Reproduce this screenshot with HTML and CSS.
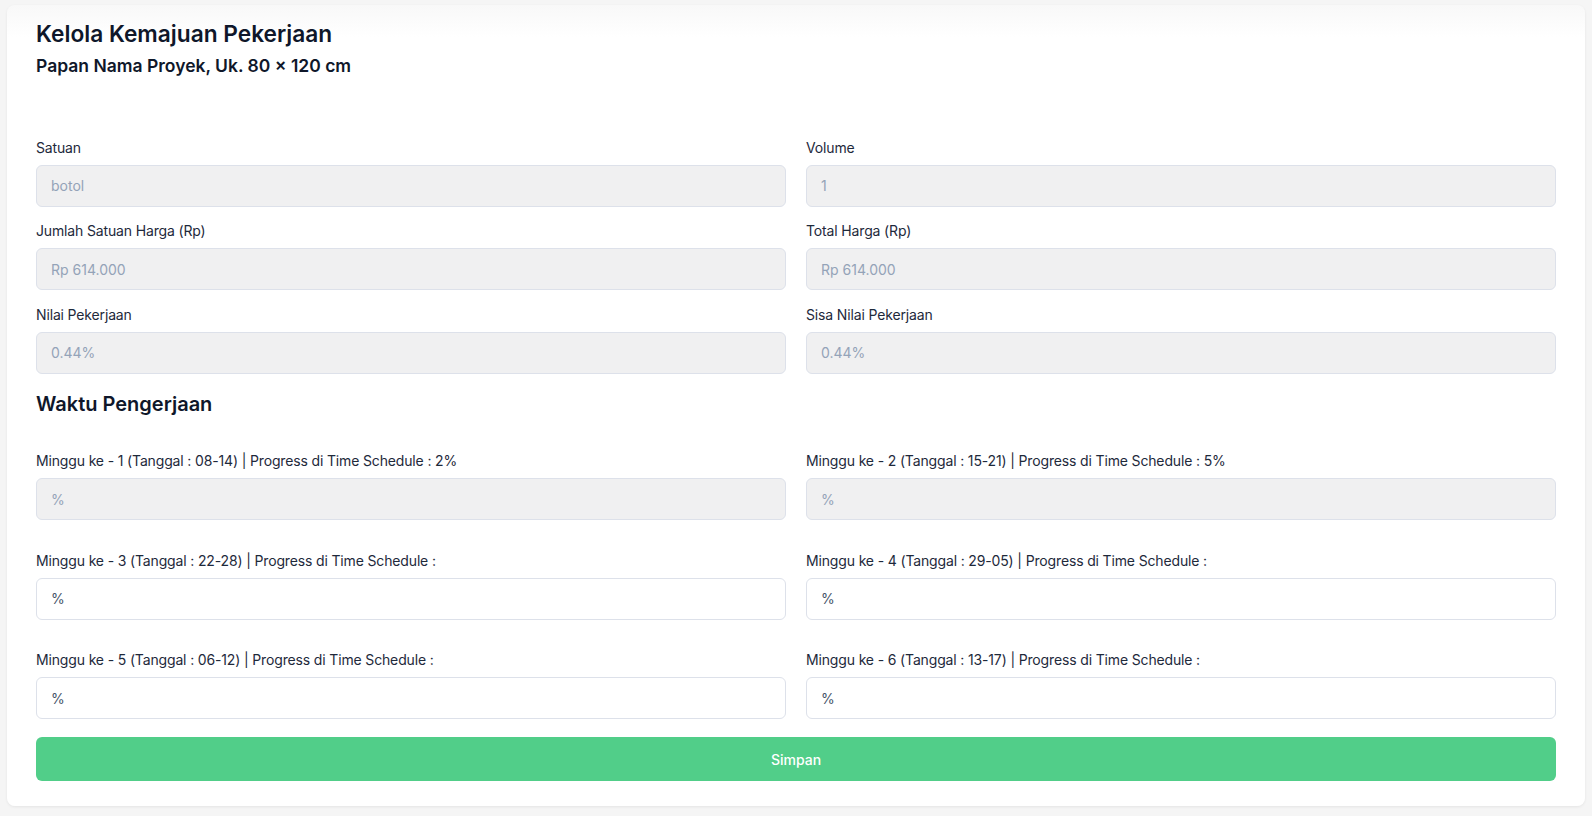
FILE: index.html
```html
<!DOCTYPE html>
<html lang="id">
<head>
<meta charset="utf-8">
<title>Kelola Kemajuan Pekerjaan</title>
<link rel="stylesheet" href="styles.css">
</head>
<body>
<main class="card">
  <header class="card-header">
    <h1 class="title">Kelola Kemajuan Pekerjaan</h1>
    <h2 class="subtitle">Papan Nama Proyek, Uk. 80 × 120 cm</h2>
  </header>

  <form class="form">
    <div class="grid info-grid">
      <div class="field">
        <label class="label">Satuan</label>
        <input class="input" type="text" placeholder="botol" disabled>
      </div>
      <div class="field">
        <label class="label">Volume</label>
        <input class="input" type="text" placeholder="1" disabled>
      </div>
      <div class="field">
        <label class="label">Jumlah Satuan Harga (Rp)</label>
        <input class="input" type="text" placeholder="Rp 614.000" disabled>
      </div>
      <div class="field">
        <label class="label">Total Harga (Rp)</label>
        <input class="input" type="text" placeholder="Rp 614.000" disabled>
      </div>
      <div class="field">
        <label class="label">Nilai Pekerjaan</label>
        <input class="input" type="text" placeholder="0.44%" disabled>
      </div>
      <div class="field">
        <label class="label">Sisa Nilai Pekerjaan</label>
        <input class="input" type="text" placeholder="0.44%" disabled>
      </div>
    </div>

    <h3 class="section-title">Waktu Pengerjaan</h3>

    <div class="grid week-grid">
      <div class="field">
        <label class="label">Minggu ke - 1 (Tanggal : 08-14) | Progress di Time Schedule : 2%</label>
        <input class="input" type="text" placeholder="%" disabled>
      </div>
      <div class="field">
        <label class="label">Minggu ke - 2 (Tanggal : 15-21) | Progress di Time Schedule : 5%</label>
        <input class="input" type="text" placeholder="%" disabled>
      </div>
      <div class="field">
        <label class="label">Minggu ke - 3 (Tanggal : 22-28) | Progress di Time Schedule : </label>
        <input class="input" type="text" placeholder="%">
      </div>
      <div class="field">
        <label class="label">Minggu ke - 4 (Tanggal : 29-05) | Progress di Time Schedule : </label>
        <input class="input" type="text" placeholder="%">
      </div>
      <div class="field">
        <label class="label">Minggu ke - 5 (Tanggal : 06-12) | Progress di Time Schedule : </label>
        <input class="input" type="text" placeholder="%">
      </div>
      <div class="field">
        <label class="label">Minggu ke - 6 (Tanggal : 13-17) | Progress di Time Schedule : </label>
        <input class="input" type="text" placeholder="%">
      </div>
    </div>

    <button class="btn" type="button">Simpan</button>
  </form>
</main>
</body>
</html>
```

FILE: styles.css
```css
* { box-sizing: border-box; }

html, body {
  margin: 0;
  background: #f5f5f5;
}

body {
  padding: 5px 7px;
  font-family: Inter, "Noto Sans", sans-serif;
  color: #1e293b;
}

.card {
  width: 1578px;
  height: 801px;
  background: linear-gradient(#f8f8f8 0, #ffffff 32px);
  border-radius: 8px;
  box-shadow: 0 1px 3px rgba(0, 0, 0, 0.07);
  padding: 12.7px 29px 25px;
}

.card-header {
  display: flex;
  flex-direction: column;
}

.title {
  margin: 0;
  font-size: 22.7px;
  line-height: 32px;
  font-weight: 600;
  color: #0f172a;
}

.subtitle {
  margin: 2px 0 0;
  font-size: 17.5px;
  line-height: 28px;
  font-weight: 600;
  color: #0f172a;
}

.form {
  margin-top: 58.3px;
  display: flex;
  flex-direction: column;
}

.grid {
  display: grid;
  grid-template-columns: 1fr 1fr;
  column-gap: 20px;
}

.info-grid { row-gap: 14.5px; }
.week-grid { row-gap: 30.5px; }

.field {
  display: flex;
  flex-direction: column;
}

.label {
  font-size: 14px;
  line-height: 20px;
  letter-spacing: -0.15px;
  color: #1e293b;
  margin-bottom: 7px;
}

.input {
  height: 42px;
  width: 100%;
  border: 1px solid #dde1ea;
  border-radius: 6px;
  padding: 0 14px;
  font-family: inherit;
  font-size: 14px;
  color: #334155;
  background: #ffffff;
  outline: none;
}

.input::placeholder { color: #475569; opacity: 1; }

.input:disabled {
  background: #f0f0f1;
}

.input:disabled::placeholder { color: #94a3b8; }

.section-title {
  margin: 16.5px 0 33px;
  font-size: 20px;
  line-height: 28px;
  font-weight: 600;
  color: #0f172a;
}

.btn {
  margin-top: 18px;
  height: 44px;
  width: 100%;
  border: none;
  border-radius: 6px;
  background: #51ce89;
  color: #ffffff;
  font-family: inherit;
  font-size: 14px;
  font-weight: 500;
}
```
